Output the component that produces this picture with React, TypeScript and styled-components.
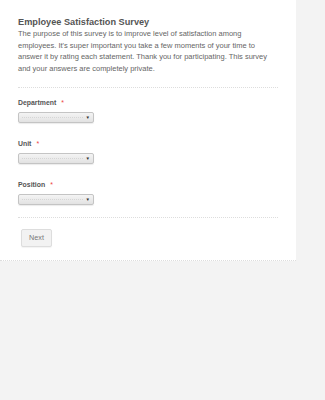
import React from "react";
import styled, { createGlobalStyle } from "styled-components";

const GlobalStyle = createGlobalStyle`
    html, body {
        margin: 0;
        padding: 0;
        background: #f3f3f3;
    }
    body {
        font-family: "Liberation Sans", Arial, sans-serif;
    }
`;

const fields = ["Department", "Unit", "Position"];

const descriptionLines = [
    "The purpose of this survey is to improve level of satisfaction among",
    "employees. It's super important you take a few moments of your time to",
    "answer it by rating each statement. Thank you for participating. This survey",
    "and your answers are completely private.",
];

const App: React.FC = () => {
    return (
        <>
            <GlobalStyle />
            <Page>
                <Header>
                    <Title>Employee Satisfaction Survey</Title>
                    <Description>
                        {descriptionLines.map((line) => (
                            <DescLine key={line}>{line}</DescLine>
                        ))}
                    </Description>
                </Header>
                <Fields>
                    {fields.map((name) => (
                        <Field key={name}>
                            <Label>
                                {name}
                                <Required>*</Required>
                            </Label>
                            <Select>
                                <Arrow>▼</Arrow>
                            </Select>
                        </Field>
                    ))}
                </Fields>
                <Footer>
                    <NextButton>Next</NextButton>
                </Footer>
            </Page>
        </>
    );
};

export default App;

const Page = styled.div`
    width: 296px;
    background: #fff;
    border-bottom: 1px dotted #ddd;
    padding: 17px 18px 13px;
    box-sizing: border-box;
    color: #555;
`;

const Header = styled.div`
    padding-bottom: 12px;
    border-bottom: 1px dotted #ddd;
`;

const Title = styled.div`
    font-size: 9.2px;
    font-weight: 700;
    line-height: 11px;
    color: #555;
`;

const Description = styled.div`
    font-size: 7.5px;
    line-height: 11.7px;
    color: #666;
`;

const DescLine = styled.div`
    white-space: nowrap;
`;

const Fields = styled.div`
    display: flex;
    flex-direction: column;
    gap: 17px;
    padding: 11px 0 12px;
    border-bottom: 1px dotted #ddd;
`;

const Field = styled.div`
    display: flex;
    flex-direction: column;
    gap: 5px;
`;

const Label = styled.div`
    font-size: 6.9px;
    font-weight: 700;
    line-height: 8px;
    color: #555;
`;

const Required = styled.span`
    color: #e44;
    margin-left: 5px;
    font-weight: 400;
`;

const Select = styled.div`
    position: relative;
    width: 76px;
    height: 11px;
    box-sizing: border-box;
    border: 1px solid #c4c4c4;
    border-radius: 2px;
    background: linear-gradient(#f4f4f4, #e2e2e2);
    box-shadow: 0 1px 1px rgba(0, 0, 0, 0.08);
    display: flex;
    justify-content: flex-end;
    align-items: center;
    padding-right: 3px;

    &::before {
        content: "";
        position: absolute;
        left: 3px;
        right: 10px;
        top: 50%;
        border-top: 1px dotted #d6d6d6;
    }
`;

const Arrow = styled.span`
    font-size: 4.5px;
    color: #333;
    line-height: 5px;
`;

const Footer = styled.div`
    padding: 11px 0 0 3px;
`;

const NextButton = styled.button`
    display: block;
    width: 31px;
    height: 18px;
    padding: 0;
    font-family: "Liberation Sans", Arial, sans-serif;
    font-size: 7.2px;
    color: #777;
    background: #f2f2f2;
    border: 1px solid #ddd;
    border-radius: 2px;
    box-shadow: 0 1px 1px rgba(0, 0, 0, 0.05);
`;
